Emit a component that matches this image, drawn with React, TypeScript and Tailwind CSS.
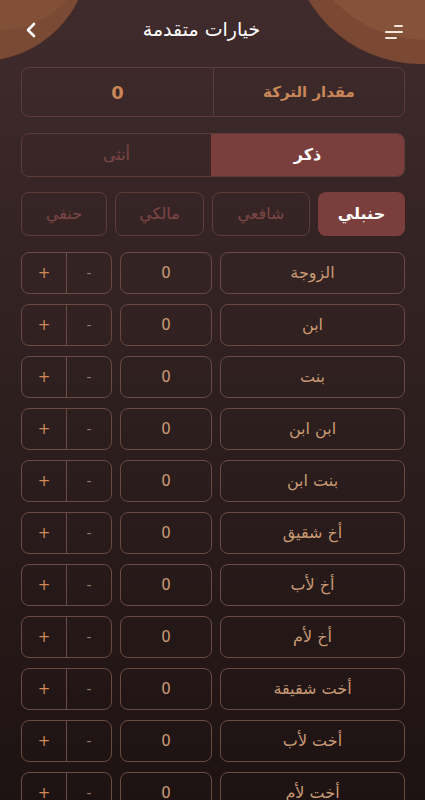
import React from "react";

const rows = [
  "الزوجة",
  "ابن",
  "بنت",
  "ابن ابن",
  "بنت ابن",
  "أخ شقيق",
  "أخ لأب",
  "أخ لأم",
  "أخت شقيقة",
  "أخت لأب",
  "أخت لأم",
];

export default function App() {
  return (
    <div
      dir="rtl"
      className="relative w-[425px] h-[800px] overflow-hidden bg-gradient-to-b from-[#402b2c] via-[#2e1f1f] to-[#1d1312]"
      style={{ fontFamily: '"DejaVu Sans", sans-serif' }}
    >
      {/* decorative blobs */}
      <div className="absolute left-[-127px] top-[-155px] w-[216px] h-[216px] rounded-full bg-[#7b4a34]" />
      <div className="absolute left-[-90px] top-[-150px] w-[180px] h-[180px] rounded-full bg-[#825037]" />
      <div className="absolute left-[290px] top-[-198px] w-[262px] h-[262px] rounded-full bg-[#7a4833]" />
      <div className="absolute left-[300px] top-[-210px] w-[250px] h-[250px] rounded-full bg-[#85533a]" />

      <div className="relative flex flex-col px-[21px] pr-[20px]">
        {/* header */}
        <div className="h-[62px] flex items-center">
          <svg width="22" height="16" viewBox="0 0 22 16" className="mr-[-1px] mt-[1px]">
            <rect x="10" y="1" width="9" height="2" rx="1" fill="#f3e6dc" />
            <rect x="1" y="7" width="18" height="2" rx="1" fill="#f3e6dc" />
            <rect x="1" y="13" width="12" height="2" rx="1" fill="#f3e6dc" />
          </svg>
          <div className="flex-1 flex justify-center pr-[20px]">
            <div className="text-white text-[19px] leading-none mt-[-4px]">خيارات متقدمة</div>
          </div>
          <svg width="14" height="16" viewBox="0 0 14 16" className="ml-[4px] mt-[-2px]">
            <path d="M9 2 L3 8 L9 14" stroke="#ffffff" strokeWidth="2.6" fill="none" strokeLinecap="round" strokeLinejoin="round" />
          </svg>
        </div>

        {/* estate */}
        <div className="mt-[5px] h-[50px] flex rounded-[8px] border border-[#5d3d38]">
          <div className="w-[191px] flex items-center justify-center text-[#c98658] font-bold text-[15px] border-l border-[#5d3d38]">
            مقدار التركة
          </div>
          <div className="flex-1 flex items-center justify-center text-[#c98658] font-bold text-[18px]">
            0
          </div>
        </div>

        {/* gender */}
        <div className="mt-[16px] h-[44px] flex rounded-[8px] border border-[#5d3d38] overflow-hidden">
          <div className="w-[193px] flex items-center justify-center bg-[#7a3f3d] text-white font-bold text-[16px]">
            ذكر
          </div>
          <div className="flex-1 flex items-center justify-center text-[#7e4646] text-[16px]">
            أنثى
          </div>
        </div>

        {/* madhab */}
        <div className="mt-[15px] h-[44px] flex gap-[8px]">
          <div className="w-[87px] rounded-[8px] bg-[#7a3f3d] flex items-center justify-center text-white font-bold text-[16px]">
            حنبلي
          </div>
          <div className="w-[98px] rounded-[8px] border border-[#5d3d38] flex items-center justify-center text-[#7e4646] text-[16px]">
            شافعي
          </div>
          <div className="w-[89px] rounded-[8px] border border-[#5d3d38] flex items-center justify-center text-[#7e4646] text-[16px]">
            مالكي
          </div>
          <div className="flex-1 rounded-[8px] border border-[#5d3d38] flex items-center justify-center text-[#7e4646] text-[16px]">
            حنفي
          </div>
        </div>

        {/* rows */}
        <div className="mt-[16px] flex flex-col gap-[10px]">
          {rows.map((r) => (
            <div key={r} className="h-[42px] flex gap-[8px]">
              <div className="w-[185px] rounded-[8px] border border-[#6a4a43] flex items-center justify-center text-[#c99a74] text-[16px]">
                {r}
              </div>
              <div className="w-[92px] rounded-[8px] border border-[#6a4a43] flex items-center justify-center text-[#c99a74] text-[15px]">
                0
              </div>
              <div className="flex-1 rounded-[8px] border border-[#6a4a43] flex">
                <div className="flex-1 flex items-center justify-center text-[#8f7a70] text-[14px] border-l border-[#6a4a43]">
                  -
                </div>
                <div className="flex-1 flex items-center justify-center text-[#d08a5a] text-[15px]">
                  +
                </div>
              </div>
            </div>
          ))}
        </div>
      </div>
    </div>
  );
}
